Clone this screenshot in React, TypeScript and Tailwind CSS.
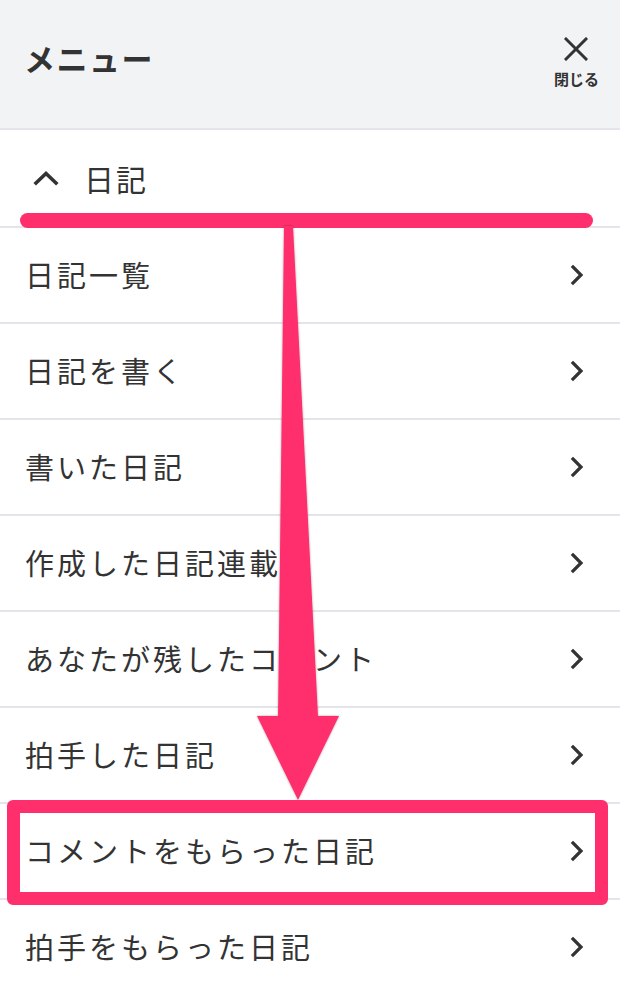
import React from "react";

const items = [
  "日記一覧",
  "日記を書く",
  "書いた日記",
  "作成した日記連載",
  "あなたが残したコメント",
  "拍手した日記",
  "コメントをもらった日記",
  "拍手をもらった日記",
];

function ChevronRight() {
  return (
    <svg width="16" height="22" viewBox="0 0 16 22" fill="none">
      <path d="M4 3 L12 11 L4 19" stroke="#333" strokeWidth="3.2" strokeLinecap="square" strokeLinejoin="miter" />
    </svg>
  );
}

function ChevronUp() {
  return (
    <svg width="26" height="16" viewBox="0 0 26 16" fill="none">
      <path d="M3 13 L13 3.5 L23 13" stroke="#333" strokeWidth="3.6" strokeLinecap="square" strokeLinejoin="miter" />
    </svg>
  );
}

function CloseIcon() {
  return (
    <svg width="24" height="24" viewBox="0 0 24 24" fill="none">
      <path d="M2 2 L22 22 M22 2 L2 22" stroke="#333" strokeWidth="3" strokeLinecap="square" />
    </svg>
  );
}

export default function App() {
  return (
    <div className="relative w-[620px] h-[990px] overflow-hidden bg-white text-[#333] font-['Noto_Sans_CJK_JP','Noto_Sans',sans-serif]">
      <header className="h-[130px] bg-[#f2f3f5] border-b-2 border-[#e4e4ea] flex items-center justify-between pl-[24px] pr-[21px]">
        <h1 className="text-[31px] font-bold tracking-[1.5px] mt-[-12px]">メニュー</h1>
        <button className="flex flex-col items-center mt-[-6px]">
          <CloseIcon />
          <span className="text-[15px] font-bold mt-[10px] leading-none">閉じる</span>
        </button>
      </header>
      <div className="h-[96px] flex items-center pl-[33px]">
        <ChevronUp />
        <span className="ml-[25px] text-[30px] tracking-[2px]">日記</span>
      </div>
      <ul>
        {items.map((t) => (
          <li
            key={t}
            className="h-[96px] border-t-2 border-[#e4e4ea] flex items-center justify-between pl-[25px] pr-[35px]"
          >
            <span className="text-[29px] tracking-[3px]">{t}</span>
            <ChevronRight />
          </li>
        ))}
      </ul>

      {/* annotation overlay */}
      <div className="absolute left-[20px] top-[213px] w-[573px] h-[15px] rounded-full bg-[#ff2f6d]" />
      <div className="absolute left-[7px] top-[800px] w-[601px] h-[105px] rounded-[6px] border-[13px] border-[#ff2f6d]" />
      <svg className="absolute left-0 top-0 pointer-events-none" width="620" height="990" viewBox="0 0 620 990">
        <defs>
          <filter id="sh" x="-20%" y="-5%" width="140%" height="110%">
            <feDropShadow dx="0" dy="0" stdDeviation="1.2" floodColor="#000" floodOpacity="0.35" />
          </filter>
        </defs>
        <polygon
          points="284,226 293,226 318,716 339,716 298,800 257,716 278,716"
          fill="#ff2f6d"
          filter="url(#sh)"
        />
      </svg>
    </div>
  );
}
